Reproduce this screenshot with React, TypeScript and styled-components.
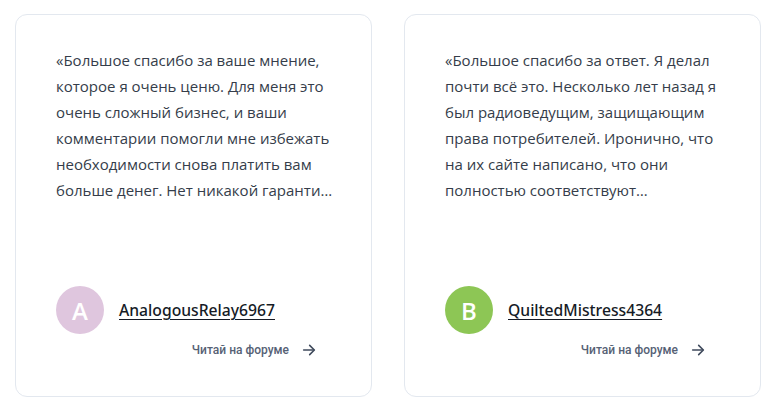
import React from 'react'
import styled, { createGlobalStyle } from 'styled-components'

type Review = {
  id: number
  text: string
  author: string
  initial: string
  color: string
}

const reviews: Review[] = [
  {
    id: 1,
    text:
      '«Большое спасибо за ваше мнение, которое я очень ценю. Для меня это очень сложный бизнес, и ваши комментарии помогли мне избежать необходимости снова платить вам больше денег. Нет никакой гаранти…',
    author: 'AnalogousRelay6967',
    initial: 'A',
    color: '#dfc6de'
  },
  {
    id: 2,
    text:
      '«Большое спасибо за ответ. Я делал почти всё это. Несколько лет назад я был радиоведущим, защищающим права потребителей. Иронично, что на их сайте написано, что они полностью соответствуют…',
    author: 'QuiltedMistress4364',
    initial: 'B',
    color: '#8dc655'
  }
]

export default function App(): JSX.Element {
  return (
    <>
      <GlobalStyle />
      <Page>
        {reviews.map((r) => (
          <Card key={r.id}>
            <Quote>{r.text}</Quote>
            <Footer>
              <Author>
                <Avatar $color={r.color}>{r.initial}</Avatar>
                <Name href="#">{r.author}</Name>
              </Author>
              <ReadLink href="#">
                Читай на форуме
                <svg width="16" height="16" viewBox="0 0 24 24" fill="none" stroke="currentColor" strokeWidth="2.4" strokeLinecap="round" strokeLinejoin="round">
                  <path d="M4 12h15" />
                  <path d="M13 5l7 7-7 7" />
                </svg>
              </ReadLink>
            </Footer>
          </Card>
        ))}
      </Page>
    </>
  )
}

const GlobalStyle = createGlobalStyle`
  html, body {
    margin: 0;
    padding: 0;
    background: #ffffff;
  }
  body {
    font-family: "Open Sans", "Noto Sans", sans-serif;
  }
`

const Page = styled.div`
  display: grid;
  grid-template-columns: 357px 357px;
  gap: 32px;
  padding: 14px 15px;
`

const Card = styled.div`
  box-sizing: border-box;
  height: 383px;
  display: flex;
  flex-direction: column;
  justify-content: space-between;
  padding: 32px 34px 38px 40px;
  border: 1px solid #e3e8ef;
  border-radius: 12px;
  background: #fff;
`

const Quote = styled.p`
  margin: 0;
  font-size: 15px;
  line-height: 26px;
  color: #353d4a;
`

const Footer = styled.div`
  display: flex;
  flex-direction: column;
  gap: 8px;
  padding-right: 6px;
`

const Author = styled.div`
  display: flex;
  align-items: center;
  gap: 15px;
`

const Avatar = styled.div<{ $color: string }>`
  width: 48px;
  height: 48px;
  border-radius: 50%;
  background: ${(p) => p.$color};
  color: #fff;
  display: flex;
  align-items: center;
  justify-content: center;
  font-family: "Open Sans", sans-serif;
  font-weight: 600;
  font-size: 24px;
`

const Name = styled.a`
  font-family: "Noto Sans", Roboto, sans-serif;
  font-weight: 500;
  font-size: 15.7px;
  color: #161b26;
  text-decoration: underline;
  text-underline-offset: 3px;
`

const ReadLink = styled.a`
  align-self: flex-end;
  margin-right: 14px;
  display: flex;
  align-items: center;
  gap: 12px;
  font-family: Roboto, "Noto Sans", sans-serif;
  font-weight: 500;
  font-size: 12px;
  color: #566175;
  text-decoration: none;
  svg {
    color: #3f4a5c;
  }
`
